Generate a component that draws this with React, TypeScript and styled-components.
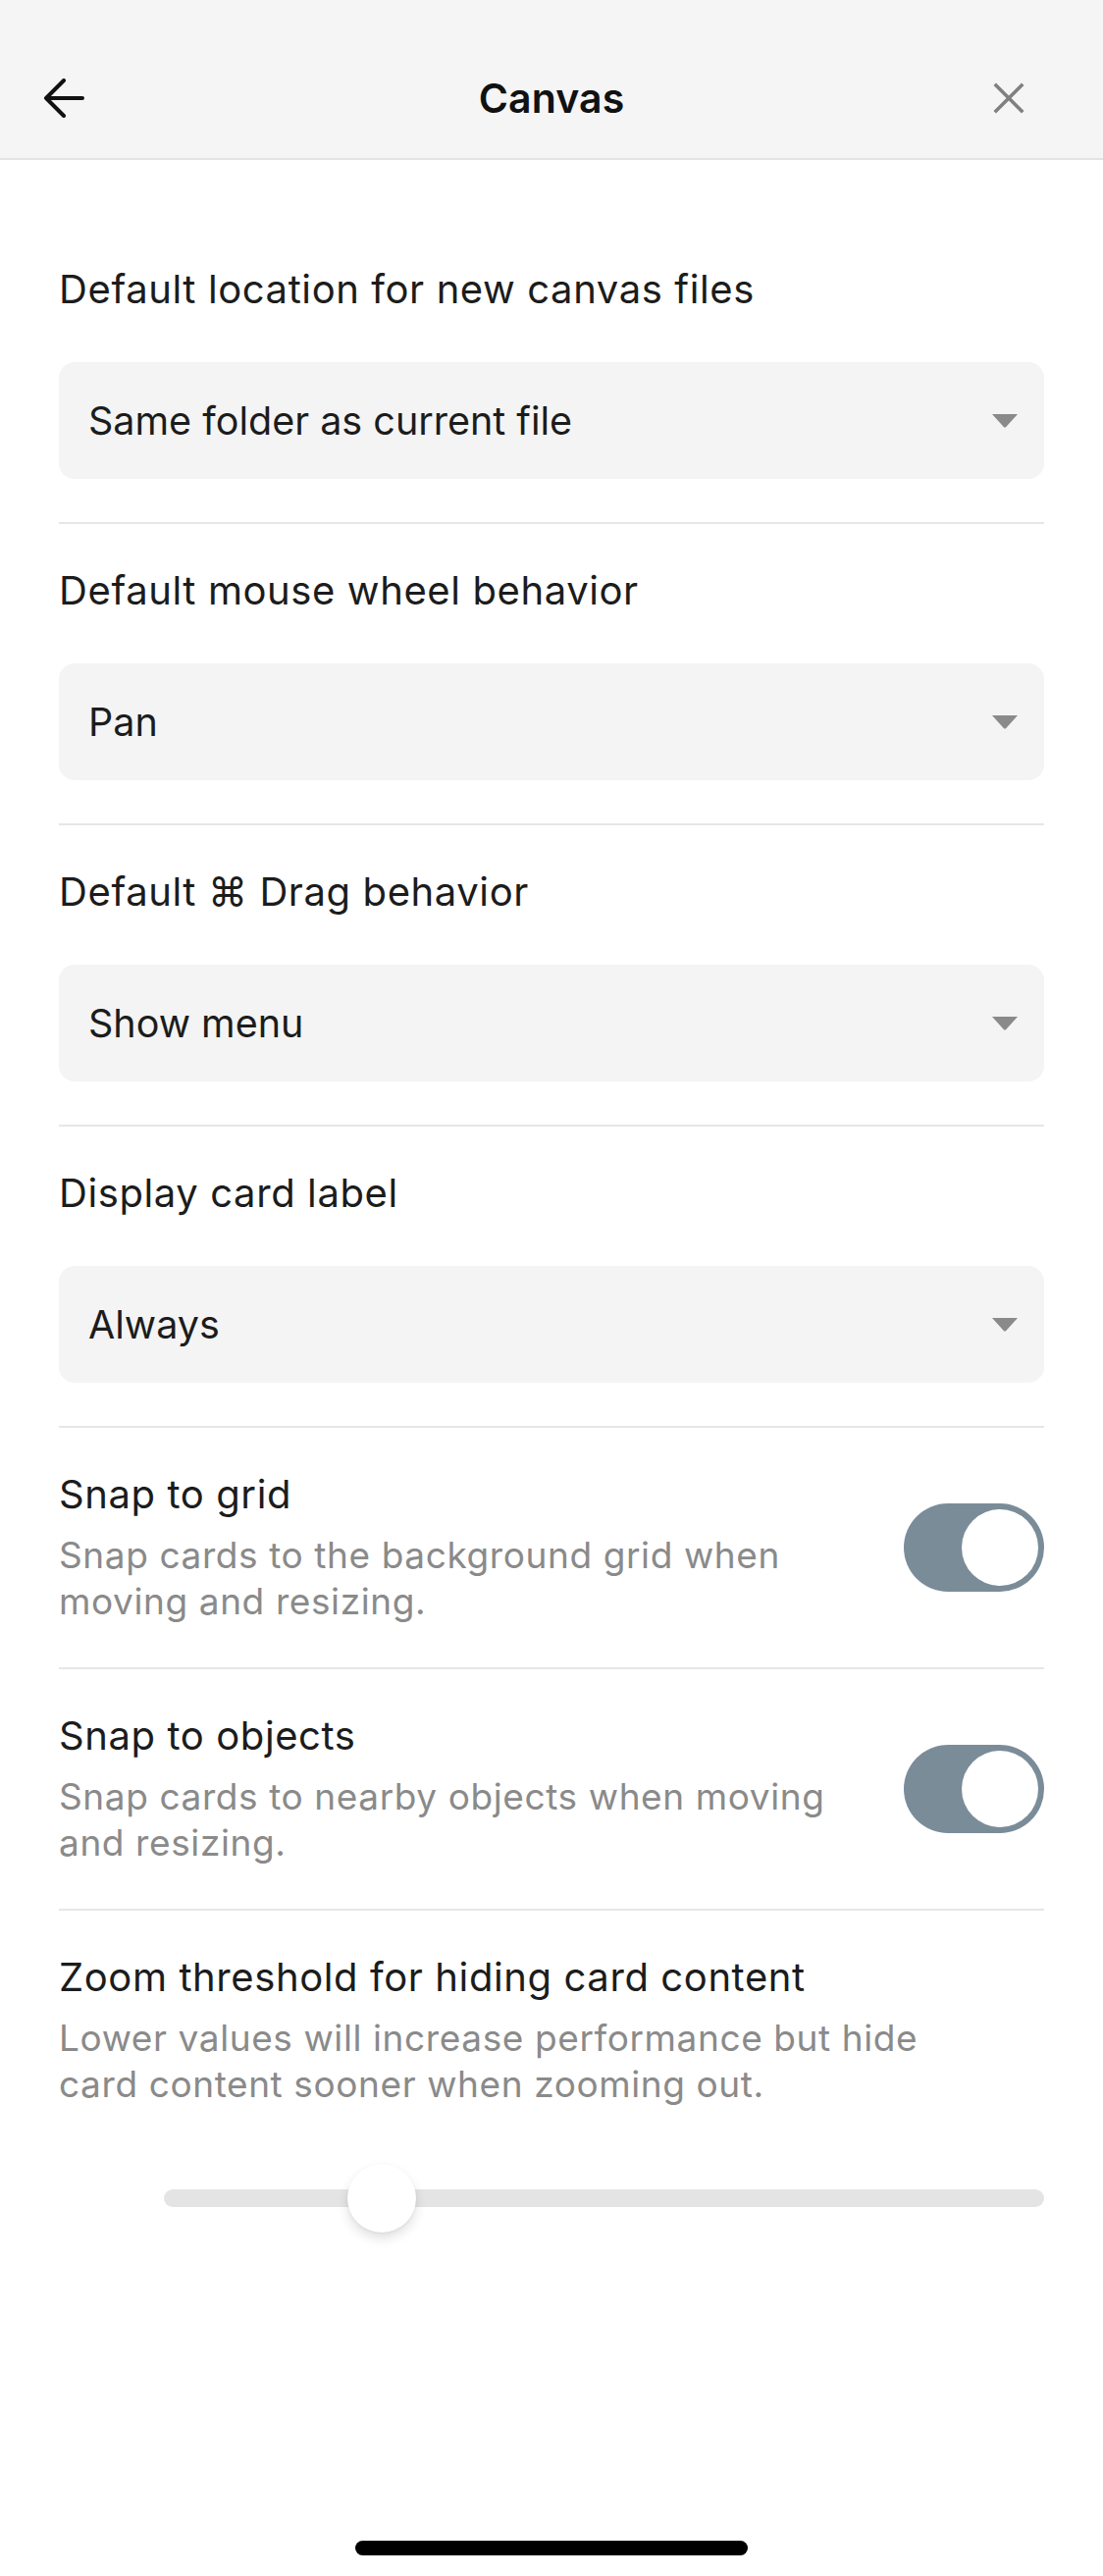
import React from "react";
import styled, { createGlobalStyle } from "styled-components";

const GlobalStyle = createGlobalStyle`
  html, body {
    margin: 0;
    padding: 0;
    background: #ffffff;
  }
  body {
    font-family: Inter, "DejaVu Sans", "Liberation Sans", sans-serif;
    -webkit-font-smoothing: antialiased;
  }
  * { box-sizing: border-box; }
`;

const Page = styled.div`
  width: 1124px;
  min-height: 2625px;
  display: flex;
  flex-direction: column;
  background: #ffffff;
`;

const Header = styled.header`
  background: #f5f5f5;
  border-bottom: 2px solid #e3e3e3;
  padding: 60px 0 21px;
  display: grid;
  grid-template-columns: 1fr auto 1fr;
  align-items: center;
  height: 163px;
`;

const HeaderSide = styled.div<{ $align: "start" | "end" }>`
  display: flex;
  align-items: center;
  height: 80px;
  justify-content: ${(p) => (p.$align === "start" ? "flex-start" : "flex-end")};
  padding: ${(p) => (p.$align === "start" ? "0 0 0 44px" : "0 80px 0 0")};
`;

const Title = styled.h1`
  margin: 0;
  font-size: 41px;
  line-height: 80px;
  font-weight: 600;
  color: #111111;
  letter-spacing: 0.1px;
`;

const IconButton = styled.button`
  border: none;
  background: transparent;
  padding: 0;
  display: flex;
  align-items: center;
  justify-content: center;
`;

const Content = styled.main`
  padding: 64px 60px 0;
  display: flex;
  flex-direction: column;
`;

const Item = styled.section<{ $last?: boolean }>`
  padding: 44px 0;
  border-bottom: ${(p) => (p.$last ? "none" : "2px solid #e6e6e6")};
`;

const ToggleItem = styled(Item)`
  display: flex;
  align-items: center;
  justify-content: space-between;
  gap: 40px;
`;

const Info = styled.div`
  display: flex;
  flex-direction: column;
`;

const Name = styled.div`
  font-size: 40px;
  line-height: 48px;
  letter-spacing: 0.6px;
  color: #1c1c1c;
  white-space: nowrap;
`;

const Desc = styled.div`
  margin-top: 14px;
  font-size: 37px;
  line-height: 47px;
  letter-spacing: 0.6px;
  color: #8a8a8a;
  white-space: nowrap;
`;

const Dropdown = styled.div`
  margin-top: 50px;
  height: 119px;
  border-radius: 16px;
  background: #f4f4f4;
  display: flex;
  align-items: center;
  justify-content: space-between;
  padding: 0 27px 0 30px;
  font-size: 39.5px;
  color: #1c1c1c;
`;

const Caret = styled.svg`
  width: 26px;
  height: 14px;
  display: block;
`;

const Toggle = styled.div<{ $on: boolean }>`
  flex: none;
  width: 143px;
  height: 90px;
  border-radius: 45px;
  background: ${(p) => (p.$on ? "#7b8c99" : "#e3e3e3")};
  padding: 6px;
  display: flex;
  justify-content: ${(p) => (p.$on ? "flex-end" : "flex-start")};
`;

const Knob = styled.div`
  width: 78px;
  height: 78px;
  border-radius: 50%;
  background: #ffffff;
`;

const SliderRow = styled.div`
  margin-top: 58px;
  height: 70px;
  display: flex;
  align-items: center;
  justify-content: flex-end;
`;

const Track = styled.div`
  position: relative;
  width: 897px;
  height: 18px;
  border-radius: 9px;
  background: #e4e4e4;
`;

const Thumb = styled.div`
  position: absolute;
  top: 50%;
  width: 70px;
  height: 70px;
  margin: -35px 0 0 -35px;
  border-radius: 50%;
  background: #ffffff;
  box-shadow: 0 6px 12px rgba(0, 0, 0, 0.12), 0 1px 3px rgba(0, 0, 0, 0.06);
`;

const HomeBar = styled.div`
  margin: auto auto 21px;
  width: 400px;
  height: 15px;
  border-radius: 8px;
  background: #000000;
`;

const DropdownSetting = ({ name, value }: { name: string; value: string }) => (
  <Item>
    <Name>{name}</Name>
    <Dropdown>
      <span>{value}</span>
      <Caret viewBox="0 0 26 14">
        <path d="M0 0 H26 L14 13.2 Q13 14 12 13.2 Z" fill="#8a8a8a" />
      </Caret>
    </Dropdown>
  </Item>
);

const ToggleSetting = ({ name, lines }: { name: string; lines: string[] }) => (
  <ToggleItem>
    <Info>
      <Name>{name}</Name>
      <Desc>
        {lines.map((l, i) => (
          <React.Fragment key={i}>
            {i > 0 && <br />}
            {l}
          </React.Fragment>
        ))}
      </Desc>
    </Info>
    <Toggle $on>
      <Knob />
    </Toggle>
  </ToggleItem>
);

export default function App() {
  const sliderValue = 0.247;
  return (
    <Page>
      <GlobalStyle />
      <Header>
        <HeaderSide $align="start">
          <IconButton aria-label="Back">
            <svg width="42" height="40" viewBox="0 0 42 40" fill="none">
              <path
                d="M21 2 L3 20 L21 38 M3 20 H40"
                stroke="#111"
                strokeWidth="4"
                strokeLinecap="round"
                strokeLinejoin="round"
              />
            </svg>
          </IconButton>
        </HeaderSide>
        <Title>Canvas</Title>
        <HeaderSide $align="end">
          <IconButton aria-label="Close">
            <svg width="32" height="32" viewBox="0 0 32 32" fill="none">
              <path
                d="M3 3 L29 29 M29 3 L3 29"
                stroke="#808080"
                strokeWidth="3.6"
                strokeLinecap="square"
              />
            </svg>
          </IconButton>
        </HeaderSide>
      </Header>
      <Content>
        <DropdownSetting
          name="Default location for new canvas files"
          value="Same folder as current file"
        />
        <DropdownSetting name="Default mouse wheel behavior" value="Pan" />
        <DropdownSetting name="Default ⌘ Drag behavior" value="Show menu" />
        <DropdownSetting name="Display card label" value="Always" />
        <ToggleSetting
          name="Snap to grid"
          lines={["Snap cards to the background grid when", "moving and resizing."]}
        />
        <ToggleSetting
          name="Snap to objects"
          lines={["Snap cards to nearby objects when moving", "and resizing."]}
        />
        <Item $last>
          <Name>Zoom threshold for hiding card content</Name>
          <Desc>
            Lower values will increase performance but hide
            <br />
            card content sooner when zooming out.
          </Desc>
          <SliderRow>
            <Track>
              <Thumb style={{ left: `${sliderValue * 100}%` }} />
            </Track>
          </SliderRow>
        </Item>
      </Content>
      <HomeBar />
    </Page>
  );
}
